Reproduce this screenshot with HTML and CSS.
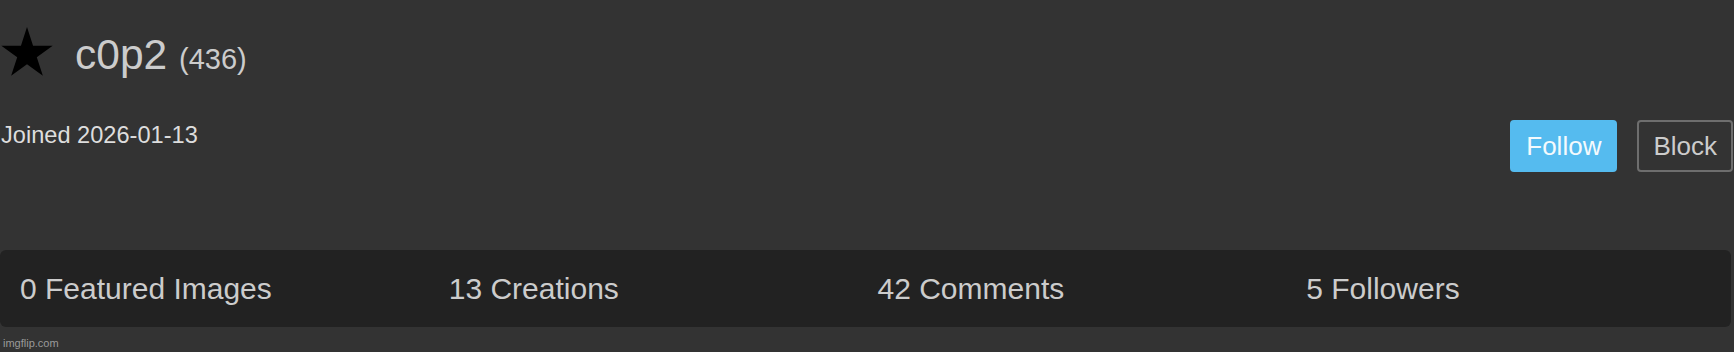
FILE: index.html
```html
<!DOCTYPE html>
<html>
<head>
<meta charset="utf-8">
<link rel="stylesheet" href="styles.css">
</head>
<body>
<div class="page">
  <div class="header">
    <svg class="star" width="52" height="52" viewBox="0 0 52 52"><polygon points="26,1 32.05,19.67 51.68,19.66 35.8,31.18 41.87,49.84 26,38.3 10.13,49.84 16.2,31.18 0.32,19.66 19.95,19.67" fill="#000"/></svg>
    <div class="name">c0p2 <span class="points">(436)</span></div>
  </div>
  <div class="info-row">
    <div class="joined">Joined 2026-01-13</div>
    <div class="actions">
      <button class="btn btn-follow">Follow</button>
      <button class="btn btn-block">Block</button>
    </div>
  </div>
  <div class="stats">
    <div class="stat">0 Featured Images</div>
    <div class="stat">13 Creations</div>
    <div class="stat">42 Comments</div>
    <div class="stat">5 Followers</div>
  </div>
  <div class="watermark">imgflip.com</div>
</div>
</body>
</html>
```

FILE: styles.css
```css
html, body {
  margin: 0;
  padding: 0;
  background: #333333;
  height: 100%;
}
body {
  font-family: "Liberation Sans", Arial, Helvetica, sans-serif;
  color: #cccccc;
}
.page {
  padding: 26px 1px 0 0;
}
.header {
  display: flex;
  align-items: flex-start;
  gap: 22px;
  height: 52px;
}
.star {
  display: block;
  margin-left: 1px;
}
.name {
  font-size: 42.5px;
  line-height: 48px;
  height: 48px;
  margin-top: 5px;
  color: #cccccc;
}
.points {
  font-size: 29px;
  line-height: 1;
}
.info-row {
  display: flex;
  justify-content: space-between;
  align-items: flex-start;
  margin-top: 42px;
}
.joined {
  font-size: 23.6px;
  line-height: 27px;
  margin-top: 2px;
  margin-left: 1px;
  color: #dddddd;
}
.actions {
  display: flex;
  gap: 20px;
}
.btn {
  font-family: "Liberation Sans", Arial, Helvetica, sans-serif;
  font-size: 26px;
  height: 52px;
  line-height: 48px;
  padding: 0 14px;
  border-radius: 4px;
  border: 2px solid transparent;
  box-sizing: border-box;
  margin: 0;
}
.btn-follow {
  background: #55bbef;
  border-color: #55bbef;
  color: #f4fafd;
}
.btn-block {
  background: transparent;
  border-color: #6e6e6e;
  color: #cccccc;
}
.stats {
  display: flex;
  margin-top: 78px;
  margin-right: 2px;
  height: 77px;
  align-items: center;
  background: #222222;
  border-radius: 6px;
  padding: 0 8px;
}
.stat {
  flex: 1;
  padding-left: 12px;
  font-size: 30px;
  line-height: 34px;
  color: #cccccc;
}
.watermark {
  font-size: 11px;
  line-height: 13px;
  margin-top: 10px;
  margin-left: 3px;
  color: #9a9a9a;
}
```
